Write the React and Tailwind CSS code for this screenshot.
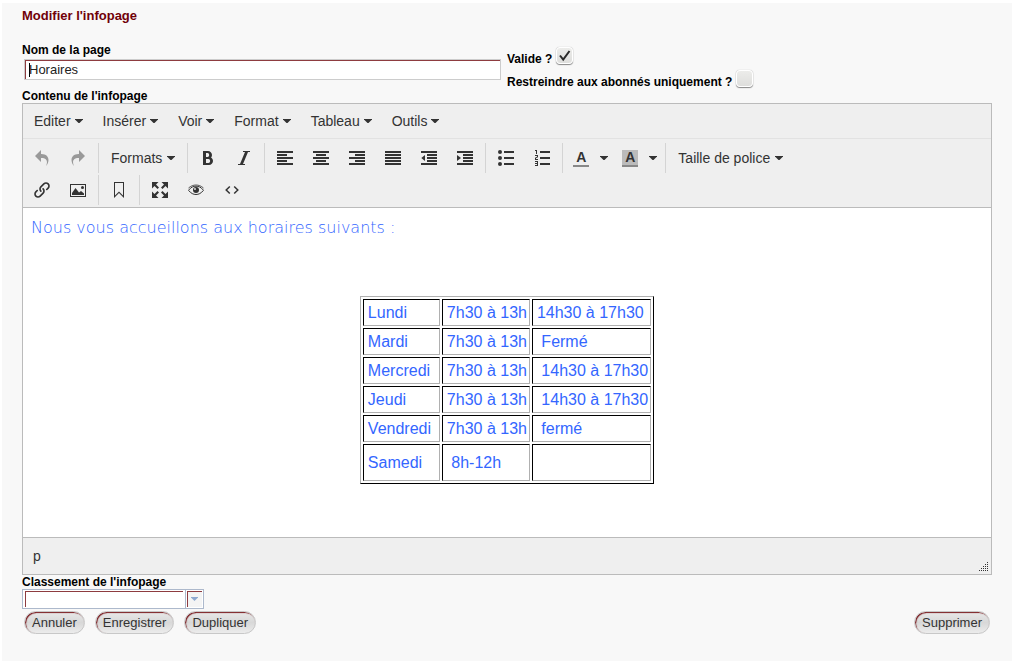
import React from "react";
import {
  ImUndo2,
  ImRedo2,
  ImBold,
  ImItalic,
  ImLink,
  ImImage,
  ImEnlarge,
  ImListNumbered,
} from "react-icons/im";

const menus = ["Editer", "Insérer", "Voir", "Format", "Tableau", "Outils"];

const hours = [
  ["Lundi", "7h30 à 13h", "14h30 à 17h30"],
  ["Mardi", "7h30 à 13h", "\u00a0Fermé"],
  ["Mercredi", "7h30 à 13h", "\u00a014h30 à 17h30"],
  ["Jeudi", "7h30 à 13h", "\u00a014h30 à 17h30"],
  ["Vendredi", "7h30 à 13h", "\u00a0fermé"],
  ["Samedi", "\u00a08h-12h", "\u00a0"],
];

function Caret() {
  return (
    <svg width="8" height="4" viewBox="0 0 8 4" className="shrink-0 fill-[#333]" aria-hidden="true">
      <path d="M0 0h8v.5L4.500 4h-1L0 .5z" />
    </svg>
  );
}

function Icon({ children }) {
  return (
    <svg width="16" height="16" viewBox="0 0 16 16" fill="currentColor" aria-hidden="true">
      {children}
    </svg>
  );
}

// Five text lines, each given as [x, width]
function Lines({ rows, children }) {
  return (
    <Icon>
      {rows.map(([x, w], i) => (
        <rect key={i} x={x} y={1 + i * 3} width={w} height="2" />
      ))}
      {children}
    </Icon>
  );
}

function Tool({ label, disabled, children }) {
  return (
    <button
      type="button"
      aria-label={label}
      disabled={disabled}
      className="flex h-[30px] w-9 items-center justify-center text-[#333] disabled:text-[#999]"
    >
      {children}
    </button>
  );
}

function Group({ first, children }) {
  return (
    <div className={first ? "flex pr-0.5" : "flex border-l border-[#d4d4d4] px-0.5"}>{children}</div>
  );
}

function MenuTool({ children }) {
  return (
    <button type="button" className="flex h-[30px] items-center gap-1 px-2.5 text-sm text-[#333]">
      {children}
      <Caret />
    </button>
  );
}

function TextTool({ children }) {
  return (
    <button type="button" className="flex h-[30px] items-center gap-[5px] px-2.5 text-sm text-[#333]">
      {children}
      <Caret />
    </button>
  );
}

function ColorTool({ label, filled }) {
  return (
    <div className="flex h-[30px] w-[49px] items-center">
      <button type="button" aria-label={label} className="pl-2">
        <span
          className={
            filled
              ? "flex h-[17px] w-4 items-center justify-center border-b-2 border-[#888] bg-[#bbb] text-sm leading-none font-bold text-[#333]"
              : "flex h-[17px] w-4 items-center justify-center border-b-2 border-[#888] text-sm leading-none font-bold text-[#333]"
          }
        >
          A
        </span>
      </button>
      <button type="button" aria-label={`${label} : choisir`} className="flex h-full items-center pl-[11px]">
        <Caret />
      </button>
    </div>
  );
}

function PillButton({ children }) {
  return (
    <button
      type="button"
      className="h-[23px] rounded-full border border-[#c8c8c8] bg-linear-to-b from-[#e9e9e9] via-[#d8d8d8] to-[#ececec] px-[7px] text-[13px] leading-5 text-[#333] shadow-[inset_1px_1px_1px_#7a1c20]"
    >
      {children}
    </button>
  );
}

function Check({ id, label, defaultChecked }) {
  return (
    <div className="flex h-[23px] items-center gap-1">
      <label htmlFor={id} className="pt-1.5">
        {label}
      </label>
      <span className="relative flex">
        <input
          id={id}
          type="checkbox"
          defaultChecked={defaultChecked}
          className="peer size-[17px] appearance-none rounded-[4px] border border-white bg-linear-to-b from-[#ececea] to-[#dededc] shadow-[0_1px_1px_#888,0_0_1px_#aaa]"
        />
        <svg
          viewBox="0 0 17 17"
          className="pointer-events-none absolute inset-0 hidden size-[17px] fill-none stroke-[#2a2a2a] stroke-2 peer-checked:block"
          aria-hidden="true"
        >
          <path d="M4 8.5l3.2 4L13.500 4" />
        </svg>
      </span>
    </div>
  );
}

export default function App() {
  return (
    <div className="bg-white pt-[3px] pr-2.5 pb-px pl-0.5 font-['Liberation_Sans',Arial,sans-serif]">
      <main className="bg-[#f8f8f8] px-5 pb-[27px] text-xs text-black">
        <h1 className="pt-[5px] text-[13px] leading-4 font-bold text-[#700008]">Modifier l'infopage</h1>

        <form onSubmit={(e) => e.preventDefault()}>
          <div className="mt-4 flex gap-1.5 pt-1 font-bold">
            <div className="flex w-[479px] flex-col">
              <label htmlFor="nom" className="leading-3">
                Nom de la page
              </label>
              <div className="relative mt-[3px] ml-0.5 flex">
                <input
                  id="nom"
                  type="text"
                  defaultValue="Horaires"
                  className="h-[21px] w-full border border-[#ccc] bg-white px-1 text-[13px] font-normal text-[#222] shadow-[inset_1px_1px_0_#8e3c40]"
                />
                <span className="absolute top-1 left-[5px] h-3.5 w-px bg-black" />
              </div>
            </div>
            <div>
              <Check id="valide" label="Valide ?" defaultChecked />
              <Check id="abonnes" label="Restreindre aux abonnés uniquement ?" />
            </div>
          </div>

          <h2 className="leading-[13px] font-bold">Contenu de l'infopage</h2>

          <section className="border border-[#bbb] bg-[#efefef]" aria-label="Éditeur">
            <div className="flex h-[35px] items-center border-b border-[#e2e2e2] pl-px">
              {menus.map((m) => (
                <MenuTool key={m}>{m}</MenuTool>
              ))}
            </div>

            <div className="flex flex-col gap-0.5 border-b border-[#bbb] pt-1 pb-0.5 pl-px">
              <div className="flex">
                <Group first>
                  <Tool label="Annuler l'action" disabled>
                    <ImUndo2 size={16} />
                  </Tool>
                  <Tool label="Rétablir" disabled>
                    <ImRedo2 size={16} />
                  </Tool>
                </Group>
                <Group>
                  <TextTool>Formats</TextTool>
                </Group>
                <Group>
                  <Tool label="Gras">
                    <ImBold size={16} />
                  </Tool>
                  <Tool label="Italique">
                    <ImItalic size={16} />
                  </Tool>
                </Group>
                <Group>
                  <Tool label="Aligner à gauche">
                    <Lines rows={[[0, 16], [0, 10], [0, 16], [0, 10], [0, 16]]} />
                  </Tool>
                  <Tool label="Centrer">
                    <Lines rows={[[0, 16], [3, 10], [0, 16], [3, 10], [0, 16]]} />
                  </Tool>
                  <Tool label="Aligner à droite">
                    <Lines rows={[[0, 16], [6, 10], [0, 16], [6, 10], [0, 16]]} />
                  </Tool>
                  <Tool label="Justifier">
                    <Lines rows={[[0, 16], [0, 16], [0, 16], [0, 16], [0, 16]]} />
                  </Tool>
                  <Tool label="Diminuer le retrait">
                    <Lines rows={[[0, 16], [6, 10], [6, 10], [6, 10], [0, 16]]}>
                      <path d="M4 5v6L.3 8z" />
                    </Lines>
                  </Tool>
                  <Tool label="Augmenter le retrait">
                    <Lines rows={[[0, 16], [6, 10], [6, 10], [6, 10], [0, 16]]}>
                      <path d="M0 5v6l4-3z" />
                    </Lines>
                  </Tool>
                </Group>
                <Group>
                  <Tool label="Liste à puces">
                    <Icon>
                      <path d="M6 1h10v2H6zM6 7h10v2H6zM6 13h10v2H6z" />
                      <circle cx="2" cy="2" r="2" />
                      <circle cx="2" cy="8" r="2" />
                      <circle cx="2" cy="14" r="2" />
                    </Icon>
                  </Tool>
                  <Tool label="Liste numérotée">
                    <ImListNumbered size={16} />
                  </Tool>
                </Group>
                <Group>
                  <ColorTool label="Couleur du texte" />
                  <ColorTool label="Couleur de fond" filled />
                </Group>
                <Group>
                  <TextTool>Taille de police</TextTool>
                </Group>
              </div>

              <div className="flex">
                <Group first>
                  <Tool label="Lien">
                    <ImLink size={16} />
                  </Tool>
                  <Tool label="Image">
                    <Icon>
                      <path fillRule="evenodd" d="M0 2h16v13H0zM1 3v11h14V3z" />
                      <path d="M2 13V11l3.500-5 3.500 4.500L11 9l3 2.500V13z" />
                      <circle cx="12.500" cy="5.500" r="1.500" />
                    </Icon>
                  </Tool>
                </Group>
                <Group>
                  <Tool label="Ancre">
                    <Icon>
                      <path fillRule="evenodd" d="M3 0h10v16l-5-5-5 5zM4 1v12.600l4-4 4 4V1z" />
                    </Icon>
                  </Tool>
                </Group>
                <Group>
                  <Tool label="Plein écran">
                    <ImEnlarge size={16} />
                  </Tool>
                  <Tool label="Aperçu">
                    <Icon>
                      <path
                        d="M.5 8.300C3 5 5.500 4.200 8 4.200s5 .8 7.500 4.100C13 11.500 10.500 12.500 8 12.500S3 11.500.5 8.300z"
                        fill="none"
                        stroke="currentColor"
                      />
                      <path d="M.5 6C3 3.800 5.500 3 8 3s5 .8 7.500 3" fill="none" stroke="currentColor" strokeWidth=".8" />
                      <circle cx="8" cy="8" r="3" />
                      <circle cx="7" cy="7" r=".9" fill="#efefef" />
                    </Icon>
                  </Tool>
                  <Tool label="Code source">
                    <Icon>
                      <path
                        d="M5.800 4.500L2.200 8l3.600 3.500M10.200 4.500L13.800 8l-3.600 3.500"
                        fill="none"
                        stroke="currentColor"
                        strokeWidth="1.500"
                      />
                    </Icon>
                  </Tool>
                </Group>
              </div>
            </div>

            <div className="min-h-[329px] bg-white px-2 pt-2 text-base text-[#3366ff]">
              <p className="font-['DejaVu_Sans_Light','DejaVu_Sans',sans-serif] leading-6 font-extralight">
                Nous vous accueillons aux horaires suivants :
              </p>
              <table className="mx-auto mt-14 border-separate border-spacing-0.5 border border-t-[#b0b0b0] border-r-black border-b-black border-l-[#b0b0b0]">
                <tbody>
                  {hours.map((row, i) => (
                    <tr key={row[0]} className={i === hours.length - 1 ? "h-[37px]" : "h-[27px]"}>
                      {row.map((cell, j) => (
                        <td
                          key={j}
                          className="border border-t-black border-r-[#b0b0b0] border-b-[#b0b0b0] border-l-black py-0 pr-0.5 pl-1 leading-[19px] whitespace-nowrap first:w-[77px]"
                        >
                          {cell}
                        </td>
                      ))}
                    </tr>
                  ))}
                </tbody>
              </table>
            </div>

            <div className="flex h-[37px] items-end justify-between border-t border-[#bbb] pr-[3px] pl-2.5 text-sm text-[#333]">
              <span className="self-center">p</span>
              <svg width="9" height="9" viewBox="0 0 9 9" className="mb-[3px] fill-[#333]" aria-hidden="true">
                <path d="M8 0h1v1H8zM6 2h1v1H6zM8 2h1v1H8zM4 4h1v1H4zM6 4h1v1H6zM8 4h1v1H8zM2 6h1v1H2zM4 6h1v1H4zM6 6h1v1H6zM8 6h1v1H8zM0 8h1v1H0zM2 8h1v1H2zM4 8h1v1H4zM6 8h1v1H6zM8 8h1v1H8z" />
              </svg>
            </div>
          </section>

          <label htmlFor="classement" className="block w-fit leading-[14px] font-bold">
            Classement de l'infopage
          </label>
          <div className="relative flex h-5 w-[182px] border border-[#adb9cc] bg-white py-px pl-0.5">
            <select
              id="classement"
              defaultValue=""
              className="w-full appearance-none bg-white pl-1 text-[13px] shadow-[inset_1px_1px_0_#8e3c40]"
            >
              <option value=""></option>
            </select>
            <span className="pointer-events-none absolute inset-y-0 right-0 flex w-5 border-l-2 border-white bg-white">
              <span className="flex flex-1 border-l border-[#adb9cc] p-px">
                <span className="flex flex-1 items-center justify-center bg-[#f4f4f4] shadow-[inset_1px_1px_0_#8e3c40]">
                  <svg width="7" height="4" viewBox="0 0 7 4" className="fill-[#8fa9d0]" aria-hidden="true">
                    <path d="M0 0h7v.5L3.500 4 0 .5z" />
                  </svg>
                </span>
              </span>
            </span>
          </div>

          <div className="mt-0.5 flex gap-2.5 px-0.5">
            <PillButton>Annuler</PillButton>
            <PillButton>Enregistrer</PillButton>
            <PillButton>Dupliquer</PillButton>
            <div className="ml-auto flex">
              <PillButton>Supprimer</PillButton>
            </div>
          </div>
        </form>
      </main>
    </div>
  );
}
